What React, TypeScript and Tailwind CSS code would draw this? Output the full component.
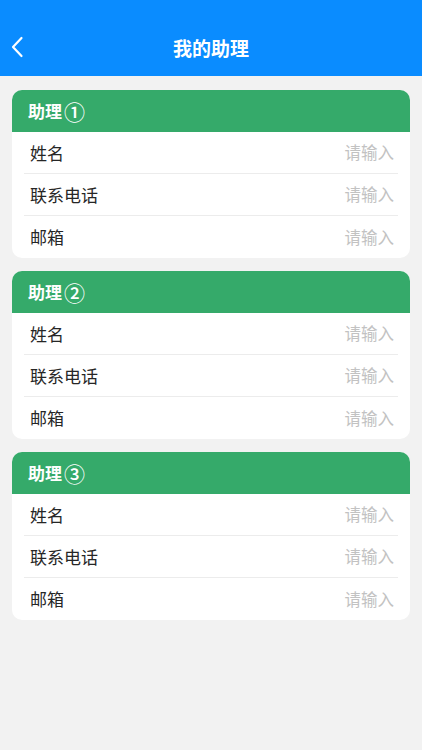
const fields = ['姓名', '联系电话', '邮箱'];
const assistants = [
  { label: '助理', num: '①' },
  { label: '助理', num: '②' },
  { label: '助理', num: '③' },
];

export default function App() {
  return (
    <div
      className="w-[422px] h-[750px] bg-[#f2f2f2] flex flex-col"
      style={{ fontFamily: '"Noto Sans CJK SC", "Noto Sans", sans-serif' }}
    >
      {/* Top bar */}
      <div className="h-[76px] bg-[#0a8cff] flex items-end pb-[11px] relative shrink-0">
        <div className="w-full h-[36px] flex items-center justify-center relative">
          <svg
            className="absolute left-[10px] top-[7px]"
            width="16"
            height="22"
            viewBox="0 0 16 22"
            fill="none"
            stroke="white"
            strokeWidth="2.2"
            strokeLinecap="round"
            strokeLinejoin="round"
          >
            <path d="M11.5 2 L3 11 L11.5 20" />
          </svg>
          <span className="text-white text-[19px] font-bold leading-none">我的助理</span>
        </div>
      </div>

      {/* Cards */}
      <div className="flex flex-col gap-[13px] px-[12px] pt-[14px]">
        {assistants.map((a) => (
          <div key={a.num} className="bg-white rounded-[10px] overflow-hidden">
            <div className="h-[42px] bg-[#35aa6a] flex items-center px-[16px]">
              <span className="text-white text-[17px] font-bold">{a.label}</span>
              <span className="text-white text-[21px] font-medium leading-none ml-[2px]">{a.num}</span>
            </div>
            <div className="px-[12px]">
              {fields.map((f, i) => (
                <div
                  key={f}
                  className={`h-[42px] flex items-center justify-between pl-[6px] pr-[4px] ${
                    i < fields.length - 1 ? 'border-b border-[#ececec]' : ''
                  }`}
                >
                  <span className="text-[17px] text-[#262626]">{f}</span>
                  <span className="text-[16.5px] text-[#c2c2c2]">请输入</span>
                </div>
              ))}
            </div>
          </div>
        ))}
      </div>
    </div>
  );
}
